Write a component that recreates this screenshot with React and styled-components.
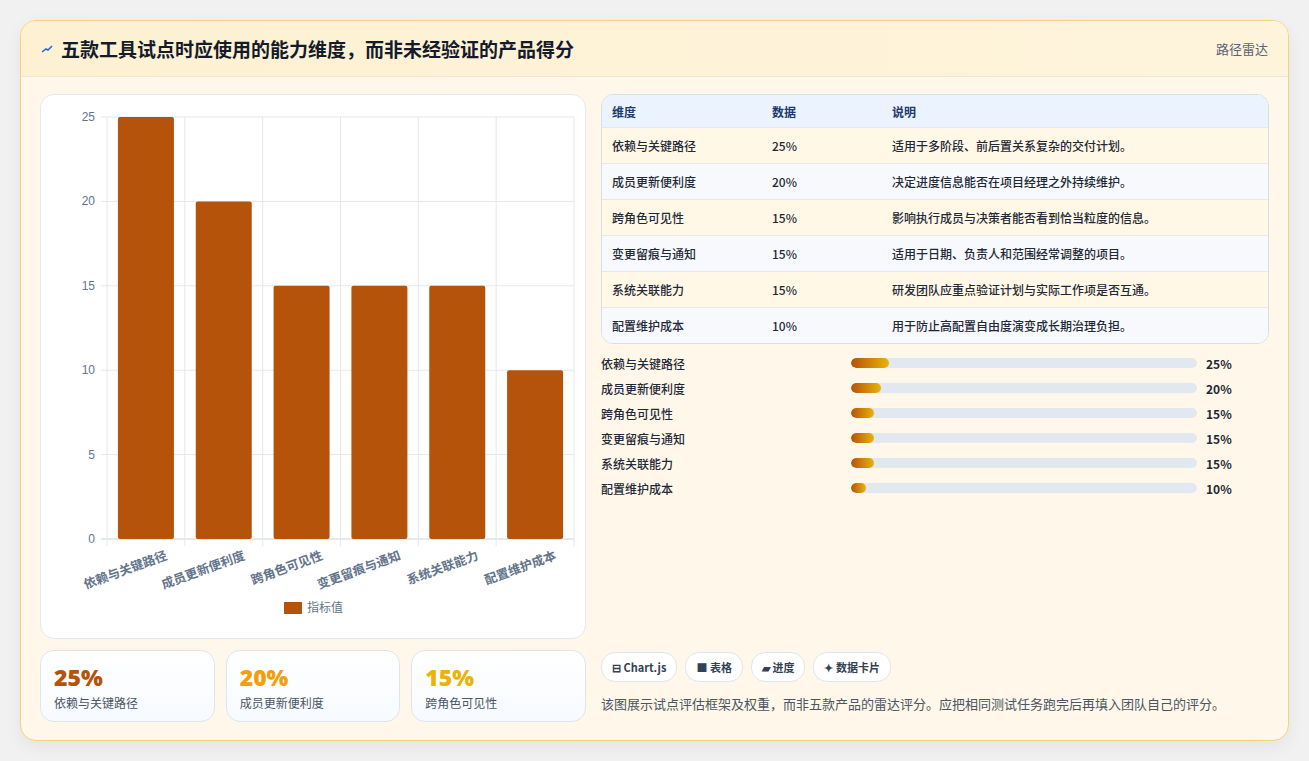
import React from "react";
import styled, { createGlobalStyle } from "styled-components";

const Global = createGlobalStyle`
  body { margin: 0; background: #f1f1f1; font-family: "Noto Sans CJK SC", "Noto Sans", sans-serif; color: #1f2937; }
`;

const Page = styled.div`
  padding: 20px 20px 20px 20px;
  width: 1309px;
  box-sizing: border-box;
`;

const Card = styled.div`
  border: 1px solid #f3d47c;
  border-radius: 16px;
  overflow: hidden;
  background: #fff8ea;
  box-shadow: 0 6px 18px rgba(0,0,0,0.06);
`;

const Header = styled.div`
  height: 55px;
  display: flex;
  align-items: center;
  justify-content: space-between;
  padding: 0 20px 0 20px;
  background: linear-gradient(90deg, #fdf1d2, #fef4dc);
  border-bottom: 1px solid #f1e6cf;
`;

const Title = styled.h1`
  margin: 0;
  font-size: 19px;
  font-weight: 700;
  color: #151b2b;
  display: flex;
  align-items: center;
  gap: 8px;
`;

const Tag = styled.span`
  font-size: 13px;
  color: #5b6474;
`;

const Body = styled.div`
  display: grid;
  grid-template-columns: 546px 668px;
  gap: 15px;
  padding: 17px 19px 18px 19px;
`;

const Col = styled.div`
  display: flex;
  flex-direction: column;
`;

const ChartCard = styled.div`
  height: 543px;
  background: #fff;
  border: 1px solid #e3e8ef;
  border-radius: 14px;
  overflow: hidden;
`;

const Stats = styled.div`
  display: grid;
  grid-template-columns: repeat(3, 1fr);
  gap: 11px;
  margin-top: 11px;
`;

const Stat = styled.div`
  height: 72px;
  box-sizing: border-box;
  padding: 12px 13px;
  border: 1px solid #dbe5f1;
  border-radius: 14px;
  background: linear-gradient(180deg, #fff, #f7faff);
`;

const StatValue = styled.div`
  font-size: 23px;
  font-weight: 800;
  line-height: 28px;
  color: ${(p) => p.color};
  font-family: "Open Sans", "Noto Sans", sans-serif;
`;

const StatLabel = styled.div`
  font-size: 12px;
  color: #4b5563;
  margin-top: 3px;
`;

const Table = styled.div`
  border: 1px solid #d6dee8;
  border-radius: 12px;
  overflow: hidden;
  background: #fff;
`;

const Row = styled.div`
  display: grid;
  grid-template-columns: 160px 120px 1fr;
  height: 35px;
  align-items: center;
  padding: 0 10px;
  font-size: 12px;
  background: ${(p) => (p.head ? "#eaf3fe" : p.alt ? "#f7f9fc" : "#fff8e6")};
  color: ${(p) => (p.head ? "#1e3a6e" : "#1f2937")};
  font-weight: ${(p) => (p.head ? 700 : 500)};
  height: ${(p) => (p.head ? "32px" : "35px")};
  border-top: ${(p) => (p.head ? "none" : "1px solid #e5e9ef")};
`;

const Bars = styled.div`
  display: flex;
  flex-direction: column;
  gap: 7px;
  margin-top: 10px;
`;

const BarRow = styled.div`
  display: grid;
  grid-template-columns: 250px 346px 1fr;
  align-items: center;
  height: 18px;
  font-size: 12px;
  font-weight: 500;
  color: #1f2937;
`;

const Track = styled.div`
  height: 10px;
  border-radius: 5px;
  background: #e2e8f0;
  overflow: hidden;
`;

const Fill = styled.div`
  height: 100%;
  border-radius: 5px;
  background: linear-gradient(90deg, #b45309, #eab308);
`;

const Pct = styled.span`
  padding-left: 9px;
  font-weight: 700;
`;

const Chips = styled.div`
  display: flex;
  gap: 8px;
  margin-top: auto;
`;

const Chip = styled.span`
  height: 28px;
  padding: 0 10px;
  border: 1px solid #dfe5ee;
  border-radius: 14px;
  background: #fff;
  display: flex;
  align-items: center;
  gap: 4px;
  font-size: 11px;
  font-weight: 700;
  color: #334155;
`;

const Note = styled.p`
  margin: 12px 0 9px;
  font-size: 13px;
  color: #4b5563;
`;

const data = [
  ["依赖与关键路径", 25, "适用于多阶段、前后置关系复杂的交付计划。"],
  ["成员更新便利度", 20, "决定进度信息能否在项目经理之外持续维护。"],
  ["跨角色可见性", 15, "影响执行成员与决策者能否看到恰当粒度的信息。"],
  ["变更留痕与通知", 15, "适用于日期、负责人和范围经常调整的项目。"],
  ["系统关联能力", 15, "研发团队应重点验证计划与实际工作项是否互通。"],
  ["配置维护成本", 10, "用于防止高配置自由度演变成长期治理负担。"],
];

function Chart() {
  const x0 = 66, x1 = 533, y0 = 22, y1 = 444;
  const w = (x1 - x0) / 6;
  const y = (v) => y1 - (v / 25) * (y1 - y0);
  return (
    <svg width="546" height="543" style={{ display: "block" }}>
      {[0, 5, 10, 15, 20, 25].map((v) => (
        <g key={v}>
          <line x1={x0 - 6} x2={x1} y1={y(v)} y2={y(v)} stroke={v === 0 ? "#cbd5e1" : "#e5e7eb"} />
          <text x={x0 - 12} y={y(v) + 4} fontSize="12" fill="#64748b" textAnchor="end" fontFamily="Liberation Sans, sans-serif">{v}</text>
        </g>
      ))}
      {Array.from({ length: 7 }).map((_, i) => (
        <line key={i} x1={x0 + i * w} x2={x0 + i * w} y1={y0} y2={y1 + 7} stroke="#e5e7eb" />
      ))}
      {data.map(([n, v], i) => {
        const cx = x0 + i * w + w / 2;
        return (
          <g key={n}>
            <rect x={cx - 28} y={y(v)} width="56" height={y1 - y(v)} rx="2" fill="#b45309" />
            <text x={cx + 22} y={y1 + 20} fontSize="12.5" fontWeight="700" fill="#64748b" textAnchor="end" transform={`rotate(-20 ${cx + 22} ${y1 + 20})`}>{n}</text>
          </g>
        );
      })}
      <rect x="243" y="507" width="18" height="12" fill="#b45309" />
      <text x="266" y="517" fontSize="12" fill="#64748b">指标值</text>
    </svg>
  );
}

export default function App() {
  return (
    <Page>
      <Global />
      <Card>
        <Header>
          <Title>
            <svg width="12" height="10" viewBox="0 0 12 10"><path d="M1 8 L5 5 L7 6 L11 2" stroke="#2563eb" strokeWidth="1.5" fill="none" /></svg>
            五款工具试点时应使用的能力维度，而非未经验证的产品得分
          </Title>
          <Tag>路径雷达</Tag>
        </Header>
        <Body>
          <Col>
            <ChartCard><Chart /></ChartCard>
            <Stats>
              <Stat><StatValue color="#b45309">25%</StatValue><StatLabel>依赖与关键路径</StatLabel></Stat>
              <Stat><StatValue color="#f59e0b">20%</StatValue><StatLabel>成员更新便利度</StatLabel></Stat>
              <Stat><StatValue color="#eab308">15%</StatValue><StatLabel>跨角色可见性</StatLabel></Stat>
            </Stats>
          </Col>
          <Col>
            <Table>
              <Row head><span>维度</span><span>数据</span><span>说明</span></Row>
              {data.map(([n, v, d], i) => (
                <Row key={n} alt={i % 2 === 1}><span>{n}</span><span>{v}%</span><span>{d}</span></Row>
              ))}
            </Table>
            <Bars>
              {data.map(([n, v]) => (
                <BarRow key={n}>
                  <span>{n}</span>
                  <Track><Fill style={{ width: `${v * 0.44}%` }} /></Track>
                  <Pct>{v}%</Pct>
                </BarRow>
              ))}
            </Bars>
            <Chips>
              <Chip>⊟ Chart.js</Chip>
              <Chip>■ 表格</Chip>
              <Chip>▰ 进度</Chip>
              <Chip>✦ 数据卡片</Chip>
            </Chips>
            <Note>该图展示试点评估框架及权重，而非五款产品的雷达评分。应把相同测试任务跑完后再填入团队自己的评分。</Note>
          </Col>
        </Body>
      </Card>
    </Page>
  );
}
